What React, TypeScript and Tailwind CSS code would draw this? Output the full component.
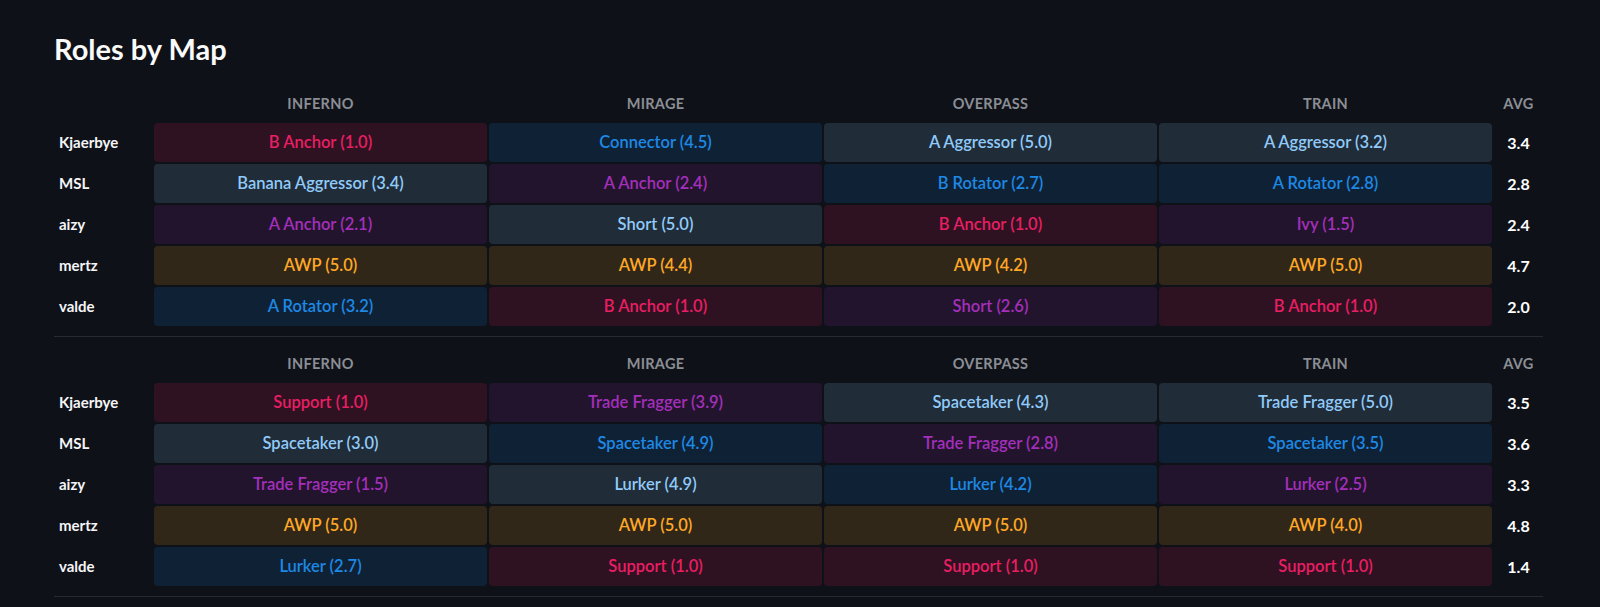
import React from "react";

type Tone = "pink" | "slate" | "blue" | "purple" | "amber";

interface Cell {
	label: string;
	tone: Tone;
}

interface Row {
	player: string;
	cells: Cell[];
	avg: string;
}

const MAPS = ["INFERNO", "MIRAGE", "OVERPASS", "TRAIN"];

const toneClass: Record<Tone, string> = {
	pink: "bg-[#e91e63]/15 text-[#e91e63]",
	slate: "bg-[#90caf9]/15 text-[#90caf9]",
	blue: "bg-[#1e88e5]/15 text-[#1e88e5]",
	purple: "bg-[#9c27b0]/15 text-[#a42fbb]",
	amber: "bg-[#ffa726]/15 text-[#ffa726]",
};

const c = (label: string, tone: Tone): Cell => ({ label, tone });

const sideA: Row[] = [
	{ player: "Kjaerbye", avg: "3.4", cells: [c("B Anchor (1.0)", "pink"), c("Connector (4.5)", "blue"), c("A Aggressor (5.0)", "slate"), c("A Aggressor (3.2)", "slate")] },
	{ player: "MSL", avg: "2.8", cells: [c("Banana Aggressor (3.4)", "slate"), c("A Anchor (2.4)", "purple"), c("B Rotator (2.7)", "blue"), c("A Rotator (2.8)", "blue")] },
	{ player: "aizy", avg: "2.4", cells: [c("A Anchor (2.1)", "purple"), c("Short (5.0)", "slate"), c("B Anchor (1.0)", "pink"), c("Ivy (1.5)", "purple")] },
	{ player: "mertz", avg: "4.7", cells: [c("AWP (5.0)", "amber"), c("AWP (4.4)", "amber"), c("AWP (4.2)", "amber"), c("AWP (5.0)", "amber")] },
	{ player: "valde", avg: "2.0", cells: [c("A Rotator (3.2)", "blue"), c("B Anchor (1.0)", "pink"), c("Short (2.6)", "purple"), c("B Anchor (1.0)", "pink")] },
];

const sideB: Row[] = [
	{ player: "Kjaerbye", avg: "3.5", cells: [c("Support (1.0)", "pink"), c("Trade Fragger (3.9)", "purple"), c("Spacetaker (4.3)", "slate"), c("Trade Fragger (5.0)", "slate")] },
	{ player: "MSL", avg: "3.6", cells: [c("Spacetaker (3.0)", "slate"), c("Spacetaker (4.9)", "blue"), c("Trade Fragger (2.8)", "purple"), c("Spacetaker (3.5)", "blue")] },
	{ player: "aizy", avg: "3.3", cells: [c("Trade Fragger (1.5)", "purple"), c("Lurker (4.9)", "slate"), c("Lurker (4.2)", "blue"), c("Lurker (2.5)", "purple")] },
	{ player: "mertz", avg: "4.8", cells: [c("AWP (5.0)", "amber"), c("AWP (5.0)", "amber"), c("AWP (5.0)", "amber"), c("AWP (4.0)", "amber")] },
	{ player: "valde", avg: "1.4", cells: [c("Lurker (2.7)", "blue"), c("Support (1.0)", "pink"), c("Support (1.0)", "pink"), c("Support (1.0)", "pink")] },
];

const gridCols = "grid grid-cols-[98px_repeat(4,333px)_49px] gap-x-[2px]";

function RoleTable({ rows }: { rows: Row[] }) {
	return (
		<div className="pt-[16px] pb-[10px] border-b border-[#262a33]">
			{/* Map headers */}
			<div className={`${gridCols} h-[20px] items-center mb-[10px]`}>
				<div />
				{MAPS.map((m) => (
					<div key={m} className="text-center text-[14.5px] font-bold tracking-[0.3px] text-[#8b8e95]">
						{m}
					</div>
				))}
				<div className="text-center text-[14.5px] font-bold tracking-[0.3px] text-[#8b8e95]">AVG</div>
			</div>

			<div className={`${gridCols} gap-y-[2px]`}>
				{rows.map((row) => (
					<React.Fragment key={row.player}>
						<div className="h-[39px] flex items-center pl-[5px] text-[15px] font-bold text-[#f5f5f7]">
							{row.player}
						</div>
						{row.cells.map((cell, i) => (
							<div
								key={i}
								className={`h-[39px] rounded-[4px] flex items-center justify-center text-[16.5px] font-semibold ${toneClass[cell.tone]}`}
							>
								{cell.label}
							</div>
						))}
						<div className="h-[39px] flex items-center justify-center text-[16px] font-bold text-white">
							{row.avg}
						</div>
					</React.Fragment>
				))}
			</div>
		</div>
	);
}

export default function App() {
	return (
		<div className="min-h-screen bg-[#0e1117] font-['Lato','Noto_Sans',sans-serif] antialiased">
			<div className="pl-[54px] pt-[31px] w-[1543px]">
				<h2 className="text-[29px] leading-[36px] font-bold text-[#fafafa] mb-[10px]">Roles by Map</h2>
				<RoleTable rows={sideA} />
				<RoleTable rows={sideB} />
			</div>
		</div>
	);
}
